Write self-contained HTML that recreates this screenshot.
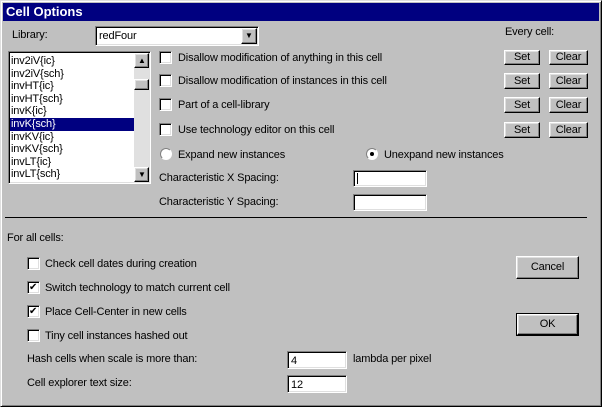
<!DOCTYPE html>
<html><head><style>
*{box-sizing:border-box;margin:0;padding:0}
body{width:602px;height:407px;background:#c0c0c0;font-family:"Liberation Sans",sans-serif;font-size:11px;color:#000;position:relative;overflow:hidden;letter-spacing:-0.15px}
.a{position:absolute;white-space:nowrap;line-height:13px;margin-top:1px}
.win{position:absolute;left:0;top:0;width:602px;height:407px;border-top:1px solid #dfdfdf;border-left:1px solid #dfdfdf;border-right:1px solid #000;border-bottom:1px solid #000;box-shadow:inset 1px 1px 0 #fff,inset -1px -1px 0 #808080}
.title{position:absolute;left:3px;top:3px;width:596px;height:18px;background:#000080;color:#fff;font-weight:bold;font-size:13px;line-height:18px;padding-left:3px;letter-spacing:0}
.sunk{position:absolute;background:#fff;border-top:1px solid #808080;border-left:1px solid #808080;border-right:1px solid #fff;border-bottom:1px solid #fff;box-shadow:inset 1px 1px 0 #000,inset -1px -1px 0 #dfdfdf}
.cb{position:absolute;width:13px;height:13px}
.btn{position:absolute;background:#c0c0c0;border-top:1px solid #fff;border-left:1px solid #fff;border-right:1px solid #000;border-bottom:1px solid #000;box-shadow:inset -1px -1px 0 #808080,inset 1px 1px 0 #dfdfdf;text-align:center;font-size:11px}
.rb{position:absolute;width:12px;height:12px;border-radius:50%;background:#fff;border:1px solid;border-color:#808080 #fff #fff #808080}
.li{position:absolute;left:10px;width:125px;height:12.5px;line-height:12px;padding-left:1px}
</style></head><body>
<div class="win"></div>
<div class="title">Cell Options</div>

<div class="a" style="left:12px;top:28px">Library:</div>
<div class="sunk" style="left:95px;top:26px;width:164px;height:20px"></div>
<div class="a" style="left:99px;top:29px">redFour</div>
<div class="btn" style="left:241px;top:28px;width:16px;height:16px"></div>
<div class="a" style="left:245px;top:31px;font-size:8px;line-height:8px">▼</div>

<div class="a" style="left:505px;top:25px">Every cell:</div>

<div class="sunk" style="left:8px;top:51px;width:143px;height:133px"></div>
<div class="li" style="top:55px">inv2iV{ic}</div>
<div class="li" style="top:67.5px">inv2iV{sch}</div>
<div class="li" style="top:80px">invHT{ic}</div>
<div class="li" style="top:92.5px">invHT{sch}</div>
<div class="li" style="top:105px">invK{ic}</div>
<div class="li" style="top:118px;background:#000080;color:#fff">invK{sch}</div>
<div class="li" style="top:130.5px">invKV{ic}</div>
<div class="li" style="top:143px">invKV{sch}</div>
<div class="li" style="top:155.5px">invLT{ic}</div>
<div class="li" style="top:168px">invLT{sch}</div>
<div style="position:absolute;left:134px;top:53px;width:15px;height:129px;background:#e0e0e0"></div>
<div class="btn" style="left:134px;top:53px;width:15px;height:15px"></div>
<div class="a" style="left:138px;top:57px;font-size:8px;line-height:8px;margin:0">▲</div>
<div class="btn" style="left:134px;top:79px;width:15px;height:11px"></div>
<div class="btn" style="left:134px;top:167px;width:15px;height:15px"></div>
<div class="a" style="left:138px;top:171px;font-size:8px;line-height:8px;margin:0">▼</div>

<div class="sunk cb" style="left:159px;top:51px"></div>
<div class="a" style="left:178px;top:51px">Disallow modification of anything in this cell</div>
<div class="sunk cb" style="left:159px;top:74px"></div>
<div class="a" style="left:178px;top:74px">Disallow modification of instances in this cell</div>
<div class="sunk cb" style="left:159px;top:98px"></div>
<div class="a" style="left:178px;top:98px">Part of a cell-library</div>
<div class="sunk cb" style="left:159px;top:123px"></div>
<div class="a" style="left:178px;top:123px">Use technology editor on this cell</div>

<div class="btn" style="left:504px;top:50px;width:36px;height:15px;line-height:13px">Set</div>
<div class="btn" style="left:549px;top:50px;width:39px;height:15px;line-height:13px">Clear</div>
<div class="btn" style="left:504px;top:73px;width:36px;height:16px;line-height:14px">Set</div>
<div class="btn" style="left:549px;top:73px;width:39px;height:16px;line-height:14px">Clear</div>
<div class="btn" style="left:504px;top:97px;width:36px;height:16px;line-height:14px">Set</div>
<div class="btn" style="left:549px;top:97px;width:39px;height:16px;line-height:14px">Clear</div>
<div class="btn" style="left:504px;top:122px;width:36px;height:16px;line-height:14px">Set</div>
<div class="btn" style="left:549px;top:122px;width:39px;height:16px;line-height:14px">Clear</div>

<div class="rb" style="left:160px;top:148px"></div>
<div class="a" style="left:178px;top:148px">Expand new instances</div>
<div class="rb" style="left:366px;top:148px"></div>
<div style="position:absolute;left:370px;top:152px;width:4px;height:4px;background:#000;border-radius:50%"></div>
<div class="a" style="left:384px;top:148px">Unexpand new instances</div>

<div class="a" style="left:159px;top:171px">Characteristic X Spacing:</div>
<div class="sunk" style="left:353px;top:170px;width:74px;height:17px"></div>
<div style="position:absolute;left:357px;top:173px;width:1px;height:11px;background:#000"></div>
<div class="a" style="left:159px;top:195px">Characteristic Y Spacing:</div>
<div class="sunk" style="left:353px;top:194px;width:74px;height:17px"></div>

<div style="position:absolute;left:5px;top:217px;width:582px;height:1px;background:#000"></div>

<div class="a" style="left:7px;top:231px">For all cells:</div>
<div class="sunk cb" style="left:27px;top:257px"></div>
<div class="a" style="left:45px;top:257px">Check cell dates during creation</div>
<div class="sunk cb" style="left:27px;top:281px"></div>
<div class="a" style="left:29px;top:280px;font-size:10px">✔</div>
<div class="a" style="left:45px;top:281px">Switch technology to match current cell</div>
<div class="sunk cb" style="left:27px;top:305px"></div>
<div class="a" style="left:29px;top:304px;font-size:10px">✔</div>
<div class="a" style="left:45px;top:305px">Place Cell-Center in new cells</div>
<div class="sunk cb" style="left:27px;top:329px"></div>
<div class="a" style="left:45px;top:329px">Tiny cell instances hashed out</div>

<div class="a" style="left:27px;top:352px">Hash cells when scale is more than:</div>
<div class="sunk" style="left:287px;top:351px;width:60px;height:18px"></div>
<div class="a" style="left:291px;top:354px">4</div>
<div class="a" style="left:353px;top:352px">lambda per pixel</div>
<div class="a" style="left:27px;top:376px">Cell explorer text size:</div>
<div class="sunk" style="left:287px;top:375px;width:60px;height:18px"></div>
<div class="a" style="left:291px;top:378px">12</div>

<div class="btn" style="left:516px;top:256px;width:63px;height:23px;line-height:21px">Cancel</div>
<div style="position:absolute;left:516px;top:313px;width:63px;height:23px;border:1px solid #000"></div>
<div class="btn" style="left:517px;top:314px;width:61px;height:21px;line-height:19px">OK</div>
</body></html>
